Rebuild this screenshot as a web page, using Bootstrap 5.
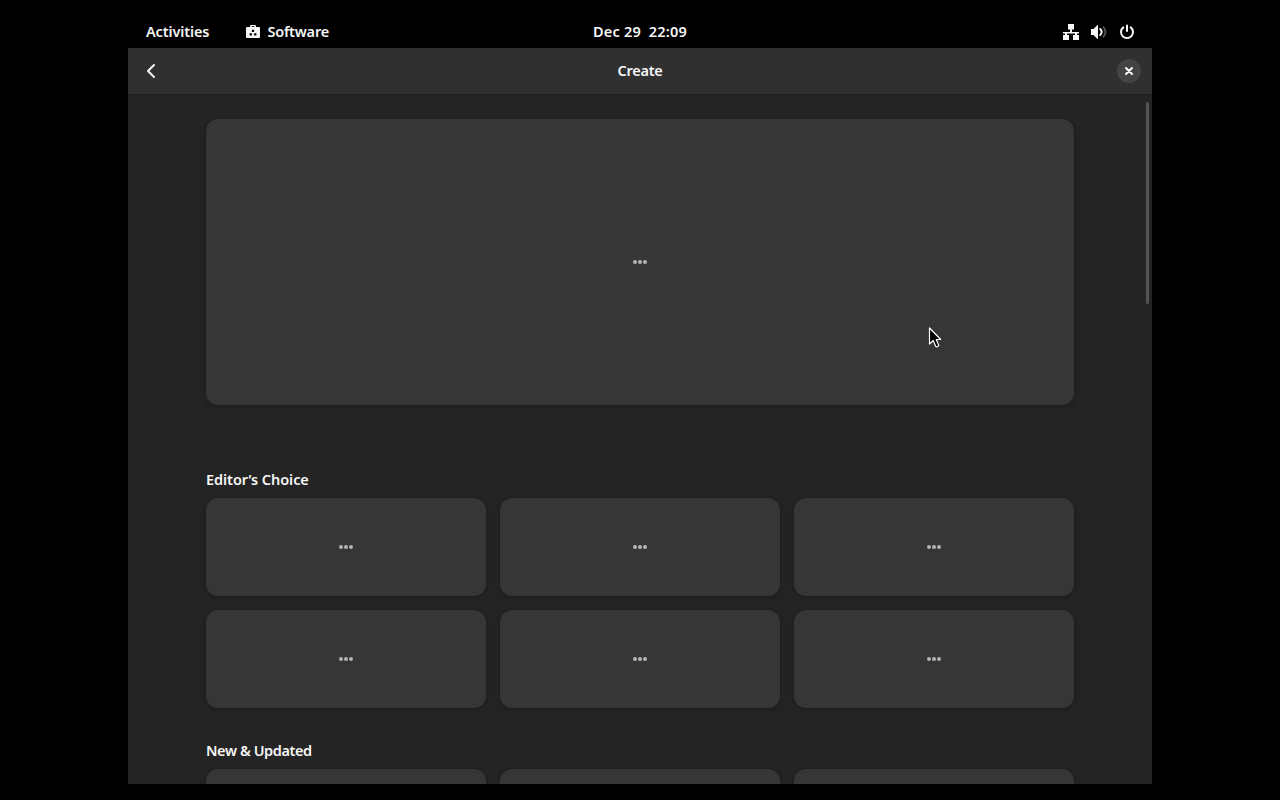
<!DOCTYPE html>
<html lang="en">
<head>
    <meta charset="UTF-8">
    <meta name="viewport" content="width=device-width, initial-scale=1.0">
    <title>Software - Create</title>
    <link href="https://cdn.jsdelivr.net/npm/bootstrap@5.3.0/dist/css/bootstrap.min.css" rel="stylesheet">
    <style>
        body { background: #000; color: #f6f6f6; font: 600 14.5px/20px "Noto Sans", "Open Sans", sans-serif; height: 800px; overflow: hidden; }
        svg { display: block; flex: none; }
        .desktop { width: 1024px; height: 768px; margin: 16px auto; }
        .topbar { height: 32px; padding: 0 17px; display: grid; grid-template-columns: 1fr auto 1fr; }
        .topbar span, .clock, .window-title { padding-bottom: 2px; }
        .activities { margin-left: 1px; letter-spacing: -.13px; }
        .app-menu { margin-left: 36px; gap: 6px; letter-spacing: -.2px; }
        .status-icons { gap: 12px; }
        .clock { white-space: pre; letter-spacing: .2px; }
        .app-window { height: 736px; background: #242424; overflow: hidden; }
        .headerbar { height: 47px; background: #303030; border-bottom: 1px solid #1f1f1f; padding: 0 11px 1px; display: grid; grid-template-columns: 1fr auto 1fr; flex: none; }
        .window-title { letter-spacing: -.25px; }
        .plain-btn { background: none; border: 0; padding: 0; color: inherit; }
        .back-btn { margin-left: 4px; }
        .close-btn { width: 24px; height: 24px; border-radius: 50%; background: #444; }
        .view { height: 689px; overflow: hidden; }
        .page-col { width: 868px; margin-left: 78px; padding-top: 24px; }
        .tile { background: #363636; border-radius: 12px; color: #b4b4b4; height: 98px; box-shadow: 0 0 0 1px rgba(0,0,0,.04), 0 1px 3px 1px rgba(0,0,0,.09), 0 2px 6px 2px rgba(0,0,0,.04); }
        .tile-feature { height: 286px; margin-bottom: 64px; }
        .tile-grid { display: grid; grid-template-columns: repeat(3, 280px); gap: 14px; }
        .section-title { font-size: 14.5px; font-weight: 600; line-height: 20px; letter-spacing: -.06px; margin: 0 0 9px; }
        .section-next { margin-top: 32px; letter-spacing: -.4px; }
        .scroll-thumb { width: 3px; height: 202px; margin: 7px 3px 0 auto; border-radius: 2px; background: #545454; }
        .pointer { position: absolute; left: 928px; top: 326px; }
    </style>
</head>
<body>
    <div class="desktop">
        <header class="topbar align-items-center">
            <div class="d-flex align-items-center">
                <span class="activities">Activities</span>
                <div class="app-menu d-flex align-items-center">
                    <svg width="16" height="16" viewBox="0 0 16 16" fill="#f6f6f6">
                        <path fill-rule="evenodd" d="M5 3V2q0-1 1-1h4q1 0 1 1v1h3q1 0 1 1v9q0 1-1 1H2q-1 0-1-1V4q0-1 1-1zm1.500 0h3v-.800h-3zM6.900 5.700v2.200h2.200V5.700zM4.600 9.200v2.300h2.300V9.200zm4.500 0v2.300h2.300V9.200z"/>
                    </svg>
                    <span>Software</span>
                </div>
            </div>
            <div class="clock">Dec 29  22:09</div>
            <div class="status-icons d-flex align-items-center justify-content-end">
                <svg width="16" height="16" viewBox="0 0 16 16" fill="#f6f6f6">
                    <path d="M5 0h6v5.500H9V8h7v1.500h-2V11h2v5h-6v-5h2V9.500H4V11h2v5H0v-5h2V9.500H0V8h7V5.500H5z"/>
                </svg>
                <svg width="16" height="16" viewBox="0 0 16 16" fill="none">
                    <path fill="#f6f6f6" d="M0 5h2.500L6.500 1H7v14h-.500l-4-4H0z"/>
                    <path stroke="#f6f6f6" stroke-width="2" stroke-linecap="round" d="M9.200 5q3 3 0 6"/>
                    <path stroke="#555" stroke-width="1.800" d="M12 2.500q5 5.500 0 11"/>
                </svg>
                <svg width="16" height="16" viewBox="0 0 16 16" fill="none" stroke="#f6f6f6" stroke-width="2" stroke-linecap="round">
                    <path d="M8 1.500v5.500M4.300 3.400a6 6 0 1 0 7.400 0"/>
                </svg>
            </div>
        </header>

        <main class="app-window d-flex flex-column">
            <div class="headerbar align-items-center">
                <button class="plain-btn back-btn text-start" type="button" aria-label="Back">
                    <svg width="16" height="16" viewBox="0 0 16 16" fill="none" stroke="#f6f6f6" stroke-width="2" stroke-linecap="round" stroke-linejoin="round">
                        <path d="M11 2 5 8l6 6"/>
                    </svg>
                </button>
                <div class="window-title">Create</div>
                <button class="plain-btn close-btn ms-auto d-flex align-items-center justify-content-center" type="button" aria-label="Close">
                    <svg width="10" height="10" viewBox="0 0 10 10" stroke="#fff" stroke-width="2" stroke-linecap="round">
                        <path d="m2 2 6 6M8 2 2 8"/>
                    </svg>
                </button>
            </div>

            <div class="view d-flex">
                <div class="page-col">
                    <div class="tile tile-feature d-flex align-items-center justify-content-center"></div>
                    <h2 class="section-title">Editor’s Choice</h2>
                    <div class="tile-grid">
                        <div class="tile d-flex align-items-center justify-content-center"></div>
                        <div class="tile d-flex align-items-center justify-content-center"></div>
                        <div class="tile d-flex align-items-center justify-content-center"></div>
                        <div class="tile d-flex align-items-center justify-content-center"></div>
                        <div class="tile d-flex align-items-center justify-content-center"></div>
                        <div class="tile d-flex align-items-center justify-content-center"></div>
                    </div>
                    <h2 class="section-title section-next">New &amp; Updated</h2>
                    <div class="tile-grid">
                        <div class="tile"></div>
                        <div class="tile"></div>
                        <div class="tile"></div>
                    </div>
                </div>
                <div class="scroll-thumb"></div>
            </div>
        </main>
    </div>

    <svg class="pointer" width="16" height="24" viewBox="0 0 16 24">
        <path d="M1.500 2v16l3.700-3.500 2.600 6q1.500 1 3-1L8.200 13.500h4.500z" fill="#000" stroke="#fff" stroke-width="1.200" stroke-linejoin="round"/>
    </svg>

    <script src="https://cdn.jsdelivr.net/npm/bootstrap@5.3.0/dist/js/bootstrap.bundle.min.js"></script>
    <script>
        // loading placeholder dots
        document.querySelectorAll('.tile.d-flex').forEach(function(tile) {
            tile.innerHTML = '<svg width="16" height="6" viewBox="0 0 16 6" fill="currentColor"><circle cx="3" cy="3" r="2"/><circle cx="8" cy="3" r="2"/><circle cx="13" cy="3" r="2"/></svg>';
        });
    </script>
</body>
</html>
